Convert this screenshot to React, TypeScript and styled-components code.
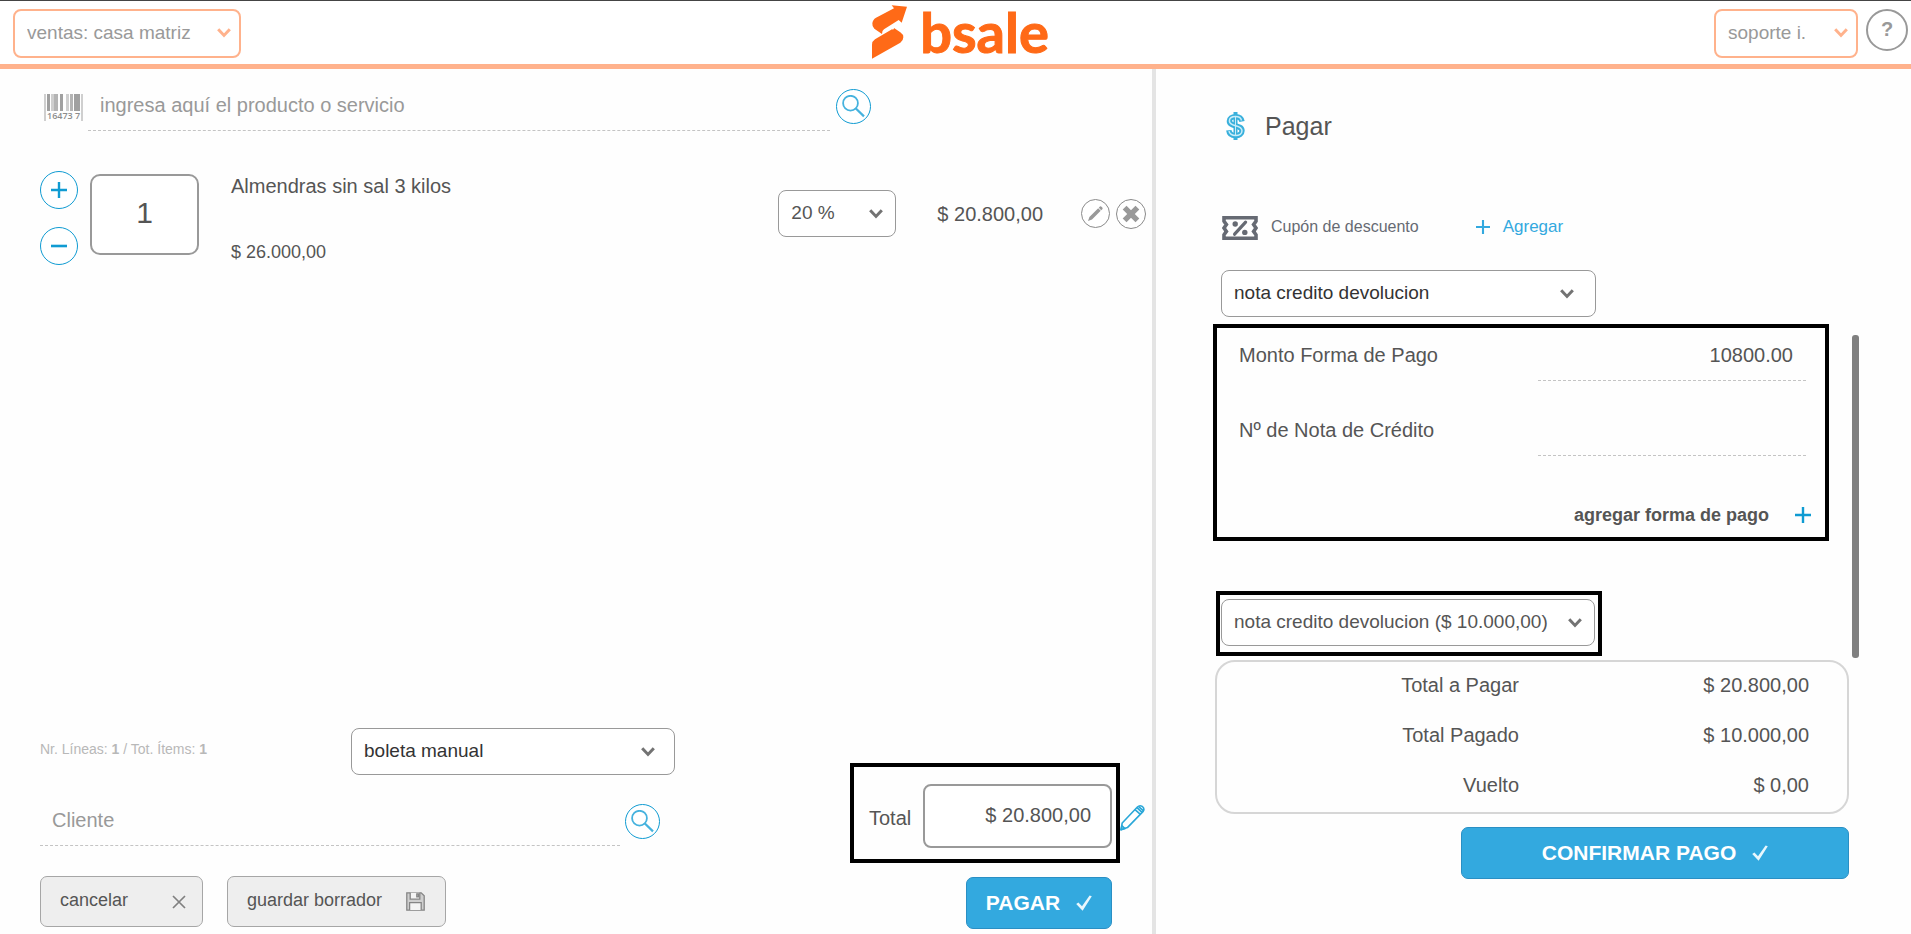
import React, { useState } from 'react';
import styled, { createGlobalStyle, css } from 'styled-components';

const color = {
  blue: '#33a9df',
  blueLine: '#0f9bd2',
  peach: '#ffb28c',
  orange: '#ff6a17',
  text: '#555',
  muted: '#999',
};

const GlobalStyle = createGlobalStyle`
  *, *::before, *::after { box-sizing: border-box; }
  body {
    margin: 0;
    background: #fefefe;
    color: ${color.text};
    font-family: "Liberation Sans", Arial, sans-serif;
    font-size: 20px;
    line-height: 24px;
  }
  button, input, select { font: inherit; color: inherit; margin: 0; }
  button { cursor: pointer; }
  svg { display: block; flex: none; }
`;

const Page = styled.div`
  display: flex;
  flex-direction: column;
  min-height: 100vh;
`;

/* ---------- header ---------- */

const Header = styled.header`
  display: grid;
  grid-template-columns: 1fr auto 1fr;
  height: 69px;
  padding: 0 3px 0 13px;
  border-top: 1px solid #444;
  border-bottom: 5px solid ${color.peach};
  background: #fff;
`;

const HeaderSide = styled.div<{ $end?: boolean }>`
  display: flex;
  align-items: flex-start;
  justify-content: ${(p) => (p.$end ? 'flex-end' : 'flex-start')};
  gap: 8px;
  padding-top: 8px;
`;

const Logo = styled.a`
  display: flex;
  align-items: center;
  gap: 12px;
  height: 62px;
  color: ${color.orange};
  text-decoration: none;
`;

const Wordmark = styled.span`
  font-family: Lato, sans-serif;
  font-weight: 700;
  font-size: 56px;
  line-height: 56px;
  -webkit-text-stroke: 1px ${color.orange};
`;

const HelpButton = styled.button`
  width: 42px;
  height: 42px;
  padding: 0 0 2px;
  border: 2px solid ${color.muted};
  border-radius: 50%;
  background: #fff;
  color: ${color.muted};
  font-size: 20px;
  font-weight: 700;
`;

/* ---------- shared controls ---------- */

const SelectBox = styled.div<{ $width: number }>`
  position: relative;
  flex: none;
  width: ${(p) => p.$width}px;
  max-width: 100%;
`;

const NativeSelect = styled.select<{ $tone: 'brand' | 'dark' | 'soft' }>`
  display: block;
  width: 100%;
  height: 47px;
  padding: 0 36px 2px 12px;
  appearance: none;
  border: 1px solid ${color.muted};
  border-radius: 8px;
  background: #fff;
  font-size: 19px;
  color: ${(p) => (p.$tone === 'dark' ? '#333' : color.text)};
  ${(p) =>
    p.$tone === 'brand' &&
    css`
      height: 49px;
      border: 2px solid ${color.peach};
      color: ${color.muted};
    `}
`;

const SelectArrow = styled.svg<{ $inset: number }>`
  position: absolute;
  right: ${(p) => p.$inset}px;
  top: 19px;
  pointer-events: none;
`;

type SelectProps = {
  label: string;
  options: string[];
  width: number;
  inset: number;
  tone?: 'brand' | 'dark' | 'soft';
};

function Select({ label, options, width, inset, tone = 'soft' }: SelectProps) {
  return (
    <SelectBox $width={width}>
      <NativeSelect $tone={tone} aria-label={label}>
        {options.map((o) => (
          <option key={o}>{o}</option>
        ))}
      </NativeSelect>
      <SelectArrow $inset={inset} width="14" height="10" viewBox="0 0 14 10" fill="none" aria-hidden="true">
        <path
          d="M1.2 1.2 7 7.4l5.8-6.2"
          stroke={tone === 'brand' ? color.peach : '#737373'}
          strokeWidth="3"
        />
      </SelectArrow>
    </SelectBox>
  );
}

const LineInput = styled.input<{ $align?: 'right' }>`
  min-width: 0;
  height: 42px;
  padding: 0 13px 8px 12px;
  border: 0;
  border-bottom: 1px dashed #c4c4c4;
  background: transparent;
  font-size: 20px;
  text-align: ${(p) => p.$align ?? 'left'};
  outline: none;
  &::placeholder { color: ${color.muted}; opacity: 1; }
`;

const RoundButton = styled.button<{ $size: number; $gray?: boolean }>`
  display: flex;
  align-items: center;
  justify-content: center;
  flex: none;
  width: ${(p) => p.$size}px;
  height: ${(p) => p.$size}px;
  padding: 0;
  border: 1px solid ${(p) => (p.$gray ? '#8a8a8a' : color.blueLine)};
  border-radius: 50%;
  background: #fff;
`;

const PrimaryButton = styled.button<{ $width: number }>`
  display: flex;
  align-items: center;
  justify-content: center;
  gap: 16px;
  width: ${(p) => p.$width}px;
  max-width: 100%;
  height: 52px;
  padding: 0;
  border: 1px solid #2a8fc4;
  border-radius: 7px;
  background: ${color.blue};
  color: #fff;
  font-size: 21px;
  font-weight: 700;
`;

const SecondaryButton = styled.button<{ $width: number }>`
  display: flex;
  align-items: center;
  justify-content: space-between;
  width: ${(p) => p.$width}px;
  height: 51px;
  padding: 0 ${(p) => (p.$width > 200 ? 20 : 16)}px 0 19px;
  border: 1px solid #a6a6a6;
  border-radius: 7px;
  background: #eee;
  font-size: 18px;
  span { padding-bottom: 3px; }
`;

/* ---------- sale column ---------- */

const Main = styled.main`
  display: grid;
  grid-template-columns: minmax(0, 1156fr) minmax(0, 755fr);
  flex: 1;
`;

const SaleColumn = styled.section`
  display: flex;
  flex-direction: column;
  padding: 20px 0 5px;
  border-right: 4px solid #e4e4e4;
`;

const SearchRow = styled.form`
  display: flex;
  align-items: flex-start;
  padding: 0 281px 0 44px;
  ${LineInput} { flex: 1; margin: 0 6px 0 5px; }
  & > svg { margin-top: 5px; }
`;

const ItemRow = styled.article`
  display: flex;
  align-items: flex-start;
  margin-top: 40px;
  padding: 0 6px 0 40px;
`;

const Stepper = styled.div`
  display: flex;
  flex-direction: column;
  gap: 18px;
`;

const Quantity = styled.input`
  width: 109px;
  height: 81px;
  margin: 3px 32px 0 12px;
  padding: 0 0 3px;
  border: 2px solid ${color.muted};
  border-radius: 10px;
  background: #fff;
  font-size: 30px;
  text-align: center;
`;

const ItemInfo = styled.div`
  flex: 1;
  display: flex;
  flex-direction: column;
  gap: 42px;
  padding-top: 3px;
`;

const UnitPrice = styled.span`
  font-size: 18px;
`;

const ItemActions = styled.div`
  display: flex;
  align-items: center;
  gap: 6px;
  margin-top: 19px;
`;

const LinePrice = styled.span`
  padding: 0 32px 0 35px;
`;

const SaleFooter = styled.div`
  display: flex;
  align-items: flex-end;
  justify-content: space-between;
  margin-top: auto;
  padding: 0 7px 0 40px;
`;

const FooterLeft = styled.div`
  display: flex;
  flex-direction: column;
  flex: 0 1 635px;
  min-width: 0;
  padding-bottom: 2px;
`;

const DocumentRow = styled.div`
  display: flex;
  justify-content: space-between;
`;

const LineCount = styled.p`
  margin: 9px 0 0;
  font-size: 14px;
  color: #b8b8b8;
`;

const CustomerRow = styled.div`
  display: flex;
  align-items: flex-start;
  gap: 5px;
  margin: 29px 15px 30px 0;
  ${LineInput} { flex: 1; }
`;

const ButtonRow = styled.div`
  display: flex;
  gap: 24px;
`;

const FooterRight = styled.div`
  display: flex;
  flex-direction: column;
  gap: 14px;
`;

const TotalRow = styled.div`
  display: flex;
  align-items: center;
`;

const Highlight = styled.div`
  border: 4px solid #000;
`;

const TotalFrame = styled(Highlight)`
  display: flex;
  align-items: center;
  justify-content: space-between;
  width: 270px;
  height: 100px;
  padding: 6px 4px 0 15px;
  label { padding-top: 4px; }
`;

const TotalInput = styled.input`
  width: 189px;
  height: 64px;
  padding: 0 19px 2px;
  border: 2px solid ${color.muted};
  border-radius: 8px;
  background: #fff;
  font-size: 20px;
  text-align: right;
`;

const PlainButton = styled.button`
  display: flex;
  align-items: center;
  padding: 0;
  border: 0;
  background: none;
`;

const EditTotal = styled(PlainButton)`
  padding-top: 8px;
`;

const PayButtonRow = styled.div`
  display: flex;
  justify-content: flex-end;
  padding-right: 33px;
`;

/* ---------- payment column ---------- */

const PaymentColumn = styled.section`
  display: flex;
  flex-direction: column;
  padding: 43px 52px 0 57px;
`;

const Title = styled.h1`
  display: flex;
  align-items: center;
  gap: 20px;
  margin: 0;
  padding-left: 13px;
  font-size: 25px;
  font-weight: 400;
  line-height: 28px;
`;

const CouponRow = styled.div`
  display: flex;
  align-items: center;
  height: 26px;
  margin: 75px 0 29px 9px;
  font-size: 16px;
  color: #666a73;
`;

const CouponLabel = styled.span`
  margin: 0 57px 2px 13px;
`;

const AddLink = styled.a`
  display: flex;
  align-items: center;
  gap: 13px;
  padding-bottom: 2px;
  font-size: 17px;
  color: ${color.blue};
  text-decoration: none;
`;

const MethodRow = styled.div`
  margin: 0 0 7px 8px;
`;

const ScrollArea = styled.div`
  display: flex;
  gap: 23px;
`;

const ScrollBody = styled.div`
  flex: 1;
  min-width: 0;
  padding-bottom: 2px;
`;

const ScrollThumb = styled.div`
  width: 7px;
  margin-top: 11px;
  border-radius: 3px;
  background: #808080;
`;

const PaymentFrame = styled(Highlight)`
  display: flex;
  flex-direction: column;
  gap: 33px;
  padding: 11px 14px 10px 22px;
`;

const FieldRow = styled.div`
  display: flex;
  justify-content: space-between;
  padding-right: 5px;
  label { line-height: 32px; }
  ${LineInput} { width: 268px; }
`;

const AddMethod = styled(PlainButton)`
  align-self: flex-end;
  gap: 26px;
  margin-top: 14px;
  font-size: 18px;
  font-weight: 700;
`;

const PaidFrame = styled(Highlight)`
  width: 386px;
  max-width: 100%;
  margin: 50px 0 0 3px;
  padding: 4px 3px 6px 1px;
`;

const Summary = styled.dl`
  display: grid;
  grid-template-columns: 1fr 290px;
  row-gap: 26px;
  margin: 2px 10px 13px 2px;
  padding: 11px 38px 15px 0;
  border: 2px solid #d6d6d6;
  border-radius: 20px;
  text-align: right;
  dt, dd { margin: 0; }
`;

const ConfirmRow = styled.div`
  display: flex;
  justify-content: flex-end;
  padding-right: 10px;
`;

/* ---------- drawings ---------- */

const LogoMark = () => (
  <svg width="36" height="54" viewBox="336 17 108 162" fill={color.orange} aria-hidden="true">
    <path d="M395 18 441 22 425 70 416 62 372 90Q366 94 366 104L343 88Q336 82 337 72 338 61 348 55L402 27Z" />
    <path d="M402 86 421 99Q430 105 430 114 430 124 421 130L336 178V136Q336 126 345 120L396 90Q402 92 402 86Z" />
  </svg>
);

const Barcode = () => (
  <svg width="39" height="27" viewBox="0 0 39 27" aria-hidden="true">
    <path d="M3 0h3v17H3zM16 0h3v17h-3zM30 0h6v17h-6z" fill="#a0a0a0" />
    <path d="M10 0h4v17h-4zM26 0h3v17h-3z" fill="#b4b4b4" />
    <path d="M0 0h2v27H0zM37 0h2v27h-2zM7 0h3v17H7zM22 0h3v17h-3z" fill="#cfcfcf" />
    <text x="3" y="25" fontSize="9" fontWeight="600" fontFamily="Open Sans, sans-serif" fill="#8c8c8c">
      16473 7
    </text>
  </svg>
);

const Magnifier = () => (
  <svg width="23" height="23" viewBox="0 0 23 23" fill="none" stroke="#45b2de" aria-hidden="true">
    <circle cx="8.5" cy="8.2" r="7.4" strokeWidth="1.8" />
    <path d="m13.6 13.2 8.4 8.2" strokeWidth="2.2" />
  </svg>
);

const Plus = ({ size = 15, stroke = color.blueLine }: { size?: number; stroke?: string }) => (
  <svg width={size} height={size} viewBox="0 0 16 16" stroke={stroke} strokeWidth="2.4" aria-hidden="true">
    <path d="M8 0v16M0 8h16" />
  </svg>
);

const Minus = () => (
  <svg width="16" height="16" viewBox="0 0 16 16" aria-hidden="true">
    <path d="M0 8h16" stroke={color.blueLine} strokeWidth="2.6" />
  </svg>
);

const PencilSmall = () => (
  <svg width="15" height="15" viewBox="0 0 15 15" fill="#999" aria-hidden="true">
    <path d="M0 15 1.4 10.9 10.2 2.3 12.7 4.8 4 13.4ZM10.8 1.7 11.9.6Q12.7-.1 13.5.7L14.3 1.5Q15 2.3 14.3 3.2L13.2 4.3Z" />
  </svg>
);

const CrossBold = () => (
  <svg width="18" height="18" viewBox="0 0 18 18" fill="none" stroke="#999" aria-hidden="true">
    <path d="m2.6 2.6 12.8 12.8M15.4 2.6 2.6 15.4" strokeWidth="5.4" />
  </svg>
);

const CrossThin = () => (
  <svg width="14" height="14" viewBox="0 0 14 14" fill="none" stroke="#808080" strokeWidth="1.7" aria-hidden="true">
    <path d="m1 1 12 12M13 1 1 13" />
  </svg>
);

const Floppy = () => (
  <svg width="19" height="19" viewBox="0 0 19 19" fill="none" stroke="#858585" strokeWidth="1.3" aria-hidden="true">
    <path d="M.8.8h14.4l3 3v14.4H.8Z" fill="#cfcfcf" />
    <path d="M4.2.8v6.4h9.6V.8M10.8 1.8h1.6v3h-1.6ZM3.6 18v-7.4h11.6V18" fill="#f4f4f4" />
  </svg>
);

const PencilBlue = () => (
  <svg width="25" height="27" viewBox="0 0 25 27" fill="none" stroke="#2aa7d8" strokeWidth="1.6" strokeLinejoin="round" aria-hidden="true">
    <path d="M1 25.8 2.2 19 17.4 3Q19.6.8 22.2 2.4 25 4.6 23.2 7.4L7.4 23.6Z" fill="#fff" />
    <path d="m15 5.6 5.4 4.8M17 3.6l5 4.8M18.8 2.6l4.4 4M1 25.8l1-4 3 2.8Z" />
  </svg>
);

const Check = () => (
  <svg width="16" height="16" viewBox="0 0 16 16" fill="#e9f7fd" aria-hidden="true">
    <path d="M.2 9 2.4 7.4 6 11.2 13.6.4 15.8 1.2 6.6 15.8Z" />
  </svg>
);

const Dollar = () => (
  <svg width="19" height="28" viewBox="0 0 19 28" fill="none" aria-hidden="true">
    <g stroke="#39b0dc" strokeWidth="5.4">
      <path d="M16 9.5C15.4 5.9 12.9 4.6 9.5 4.6 5.8 4.6 3.4 6.4 3.4 9c0 6.4 12.6 3.2 12.6 9.8 0 2.9-2.7 4.8-6.4 4.8-4 0-6.4-1.8-6.8-5.4" />
      <path d="M9.5 0v28" strokeWidth="4" />
    </g>
    <g stroke="#c9ecf8" strokeWidth="1.5">
      <path d="M15.5 8.5C14.9 5.9 12.9 4.6 9.5 4.6 5.8 4.6 3.4 6.4 3.4 9c0 6.4 12.6 3.2 12.6 9.8 0 2.9-2.7 4.8-6.4 4.8-4 0-6-1.8-6.6-4.4" />
      <path d="M9.5 5v18" strokeWidth="1" />
    </g>
  </svg>
);

const Ticket = () => (
  <svg width="36" height="24" viewBox="0 0 36 24" fill="none" stroke="#666a73" aria-hidden="true">
    <path
      d="M2 1.8H34V5.2L31.6 8.6 34 12 31.6 15.4 34 18.8V22.2H2V18.8L4.4 15.4 2 12 4.4 8.6 2 5.2Z"
      strokeWidth="3.6"
    />
    <path d="M12.6 18.2 23.6 6.2" strokeWidth="3.2" strokeLinecap="round" />
    <circle cx="13.2" cy="8" r="2.7" fill="#666a73" stroke="none" />
    <circle cx="22.8" cy="16.4" r="2.7" fill="#666a73" stroke="none" />
  </svg>
);

/* ---------- screen ---------- */

const summary = [
  ['Total a Pagar', '$ 20.800,00'],
  ['Total Pagado', '$ 10.000,00'],
  ['Vuelto', '$ 0,00'],
];

export default function App() {
  const [quantity, setQuantity] = useState(1);
  const [amount, setAmount] = useState('10800.00');

  return (
    <Page>
      <GlobalStyle />
      <Header>
        <HeaderSide>
          <Select label="Sucursal" tone="brand" width={228} inset={10} options={['ventas: casa matriz']} />
        </HeaderSide>
        <Logo href="#">
          <LogoMark />
          <Wordmark>bsale</Wordmark>
        </Logo>
        <HeaderSide $end>
          <Select label="Usuario" tone="brand" width={144} inset={10} options={['soporte i.']} />
          <HelpButton type="button">?</HelpButton>
        </HeaderSide>
      </Header>

      <Main>
        <SaleColumn>
          <SearchRow onSubmit={(e) => e.preventDefault()}>
            <Barcode />
            <LineInput aria-label="Producto o servicio" placeholder="ingresa aquí el producto o servicio" />
            <RoundButton $size={35} aria-label="Buscar producto">
              <Magnifier />
            </RoundButton>
          </SearchRow>

          <ItemRow>
            <Stepper>
              <RoundButton $size={38} type="button" aria-label="Aumentar" onClick={() => setQuantity(quantity + 1)}>
                <Plus size={16} />
              </RoundButton>
              <RoundButton
                $size={38}
                type="button"
                aria-label="Disminuir"
                onClick={() => setQuantity(Math.max(1, quantity - 1))}
              >
                <Minus />
              </RoundButton>
            </Stepper>
            <Quantity
              aria-label="Cantidad"
              inputMode="numeric"
              value={quantity}
              onChange={(e) => setQuantity(Number(e.target.value) || 1)}
            />
            <ItemInfo>
              <span>Almendras sin sal 3 kilos</span>
              <UnitPrice>$ 26.000,00</UnitPrice>
            </ItemInfo>
            <ItemActions>
              <Select label="Descuento" width={118} inset={13} options={['20 %']} />
              <LinePrice>$ 20.800,00</LinePrice>
              <RoundButton $size={29} $gray type="button" aria-label="Editar">
                <PencilSmall />
              </RoundButton>
              <RoundButton $size={30} $gray type="button" aria-label="Eliminar">
                <CrossBold />
              </RoundButton>
            </ItemActions>
          </ItemRow>

          <SaleFooter>
            <FooterLeft>
              <DocumentRow>
                <LineCount>
                  Nr. Líneas: <b>1</b> / Tot. Ítems: <b>1</b>
                </LineCount>
                <Select label="Documento" tone="dark" width={324} inset={20} options={['boleta manual']} />
              </DocumentRow>
              <CustomerRow>
                <LineInput aria-label="Cliente" placeholder="Cliente" />
                <RoundButton $size={35} type="button" aria-label="Buscar cliente">
                  <Magnifier />
                </RoundButton>
              </CustomerRow>
              <ButtonRow>
                <SecondaryButton type="button" $width={163}>
                  <span>cancelar</span>
                  <CrossThin />
                </SecondaryButton>
                <SecondaryButton type="button" $width={219}>
                  <span>guardar borrador</span>
                  <Floppy />
                </SecondaryButton>
              </ButtonRow>
            </FooterLeft>
            <FooterRight>
              <TotalRow>
                <TotalFrame>
                  <label htmlFor="total">Total</label>
                  <TotalInput id="total" readOnly value="$ 20.800,00" />
                </TotalFrame>
                <EditTotal type="button" aria-label="Editar total">
                  <PencilBlue />
                </EditTotal>
              </TotalRow>
              <PayButtonRow>
                <PrimaryButton type="button" $width={146}>
                  PAGAR
                  <Check />
                </PrimaryButton>
              </PayButtonRow>
            </FooterRight>
          </SaleFooter>
        </SaleColumn>

        <PaymentColumn>
          <Title>
            <Dollar />
            Pagar
          </Title>
          <CouponRow>
            <Ticket />
            <CouponLabel>Cupón de descuento</CouponLabel>
            <AddLink href="#">
              <Plus size={14} stroke={color.blue} />
              Agregar
            </AddLink>
          </CouponRow>
          <MethodRow>
            <Select label="Forma de pago" tone="dark" width={375} inset={22} options={['nota credito devolucion']} />
          </MethodRow>
          <ScrollArea>
            <ScrollBody>
              <PaymentFrame>
                <FieldRow>
                  <label htmlFor="amount">Monto Forma de Pago</label>
                  <LineInput id="amount" $align="right" value={amount} onChange={(e) => setAmount(e.target.value)} />
                </FieldRow>
                <FieldRow>
                  <label htmlFor="credit-note">Nº de Nota de Crédito</label>
                  <LineInput id="credit-note" $align="right" />
                </FieldRow>
                <AddMethod type="button">
                  agregar forma de pago
                  <Plus size={16} />
                </AddMethod>
              </PaymentFrame>
              <PaidFrame>
                <Select
                  label="Pagos ingresados"
                  width={374}
                  inset={13}
                  options={['nota credito devolucion ($ 10.000,00)']}
                />
              </PaidFrame>
            </ScrollBody>
            <ScrollThumb />
          </ScrollArea>
          <Summary>
            {summary.map(([name, value]) => (
              <React.Fragment key={name}>
                <dt>{name}</dt>
                <dd>{value}</dd>
              </React.Fragment>
            ))}
          </Summary>
          <ConfirmRow>
            <PrimaryButton type="button" $width={388}>
              CONFIRMAR PAGO
              <Check />
            </PrimaryButton>
          </ConfirmRow>
        </PaymentColumn>
      </Main>
    </Page>
  );
}
